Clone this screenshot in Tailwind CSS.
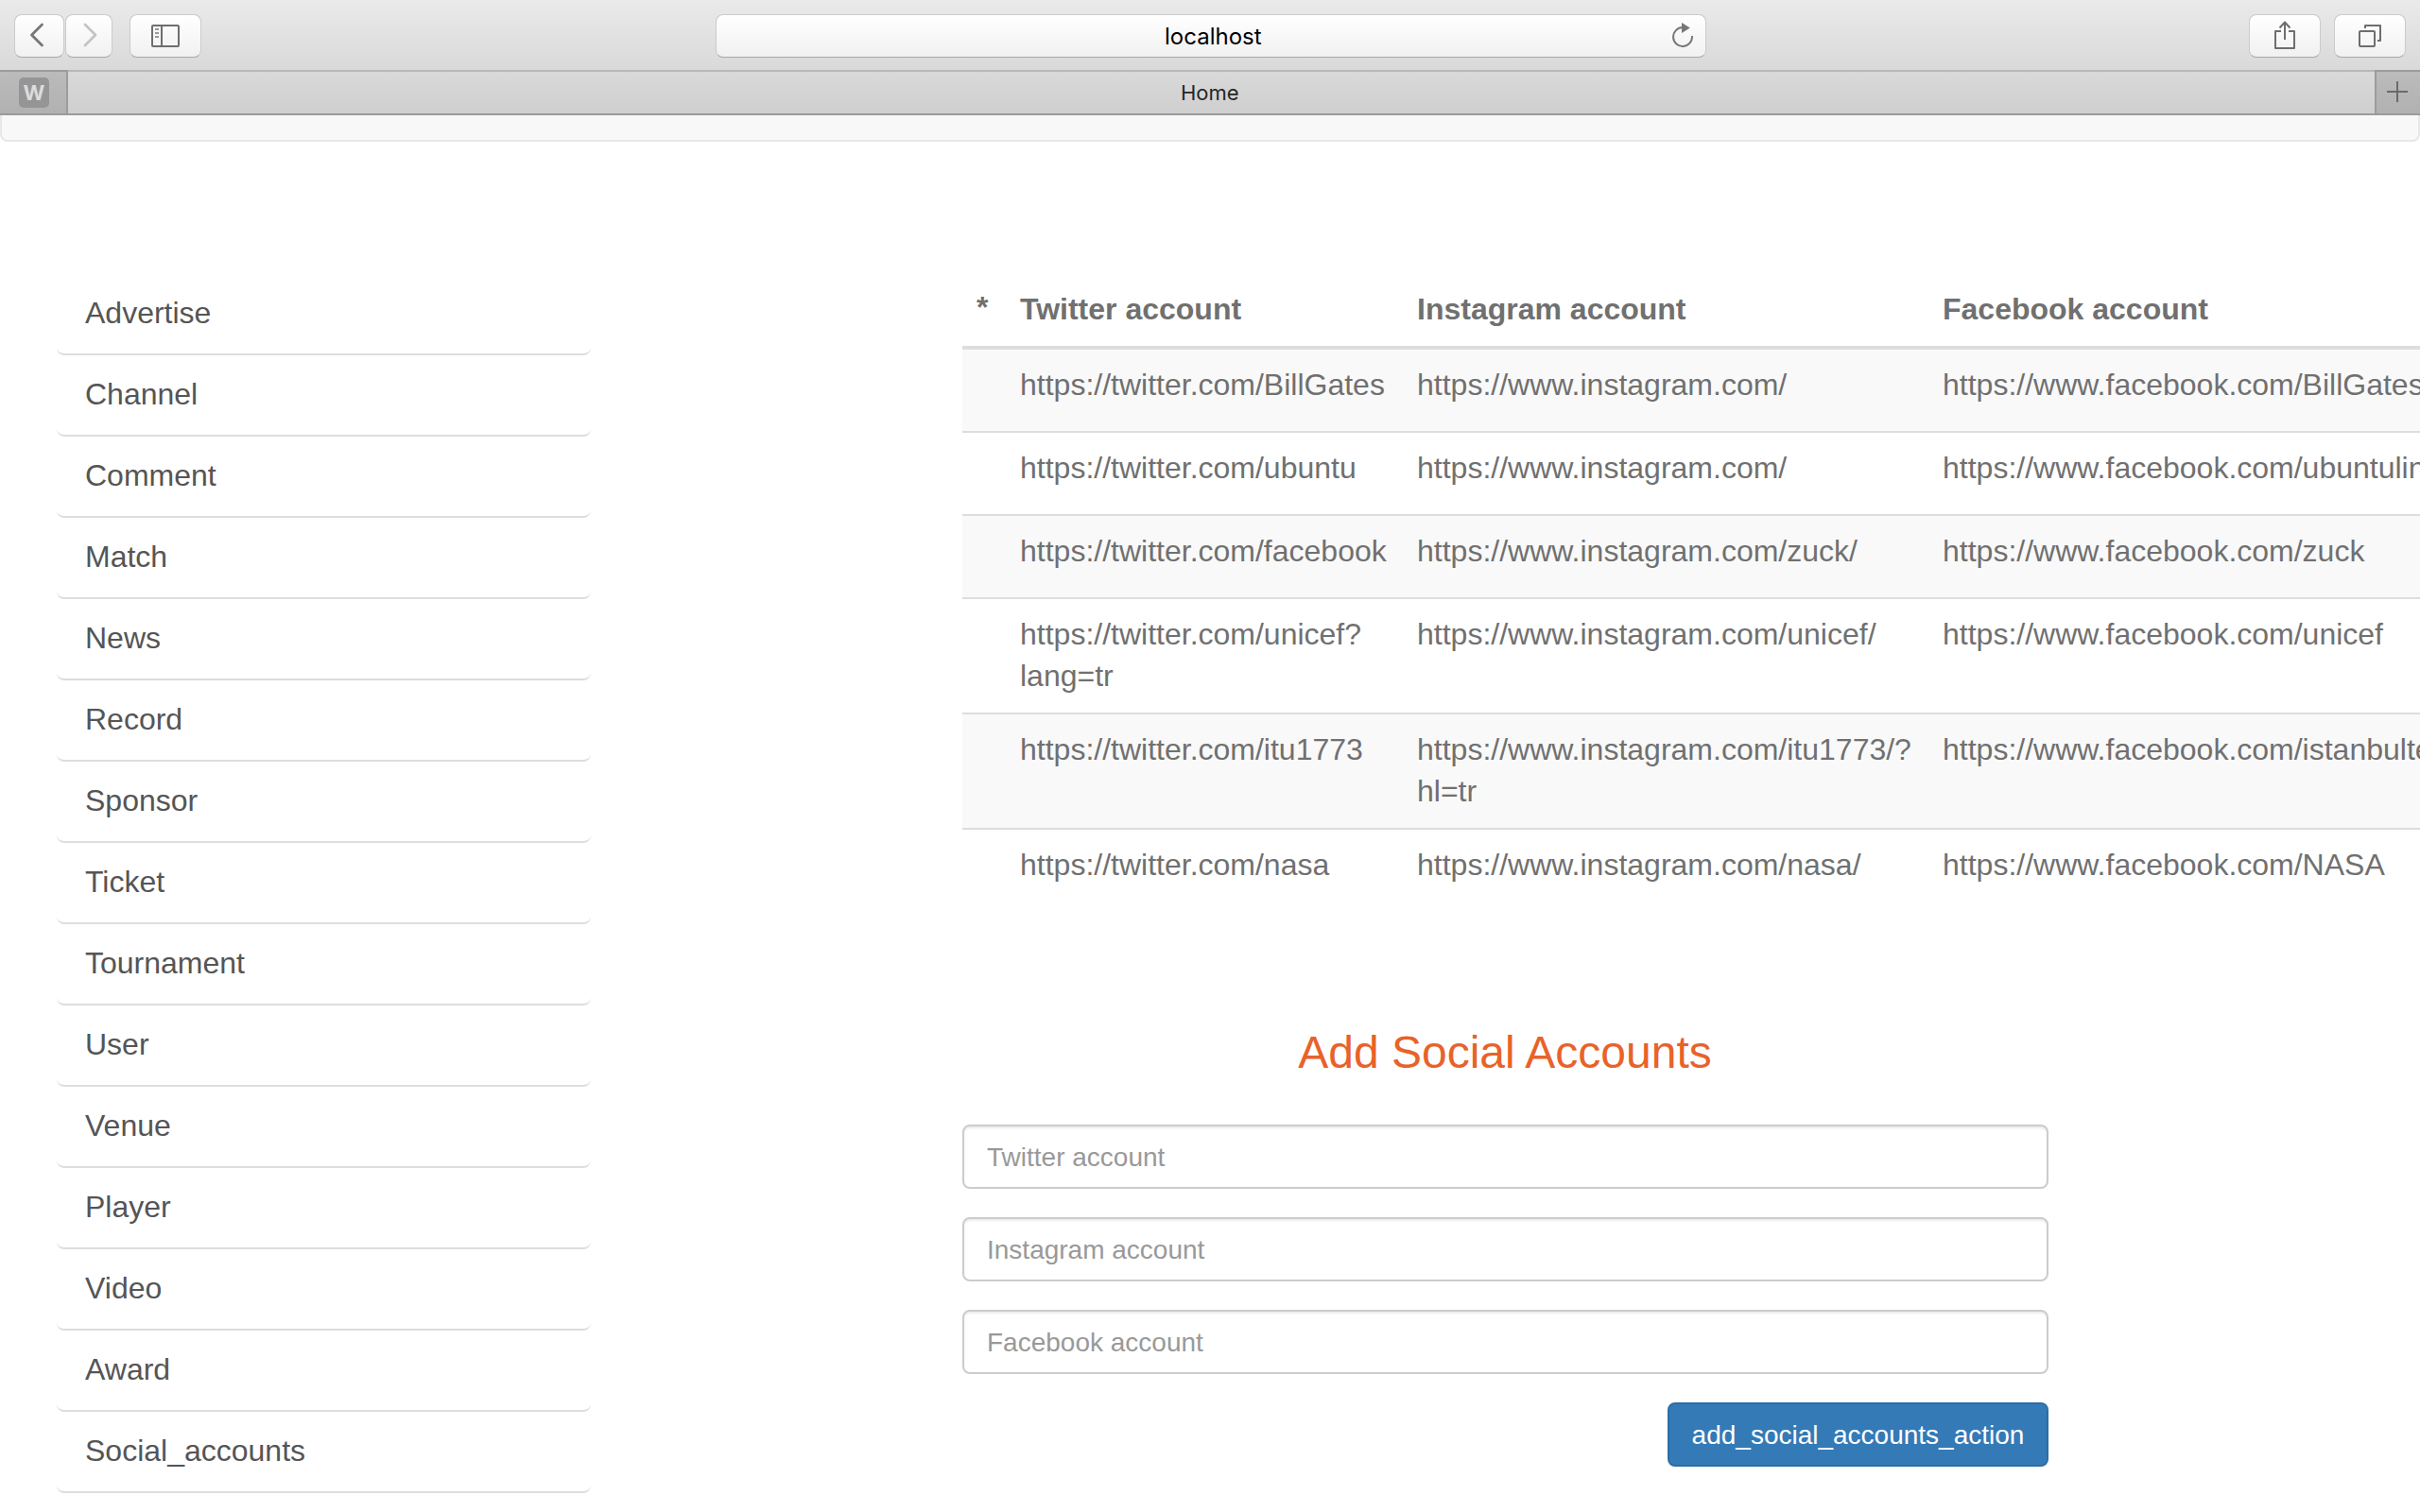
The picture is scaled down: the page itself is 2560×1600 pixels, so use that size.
<!DOCTYPE html>
<html lang="en">
<head>
<meta charset="utf-8">
<title>Home</title>
<script src="https://cdn.jsdelivr.net/npm/@tailwindcss/browser@4"></script>
</head>
<body class="w-[2560px] h-[1600px] overflow-hidden bg-white font-['Liberation_Sans',Arial,sans-serif] flex flex-col">

<!-- Browser toolbar -->
<header class="h-[76px] shrink-0 flex items-start pt-[15px] bg-linear-to-b from-[#eaeaea] to-[#d9d9d9] border-b-2 border-[#b8b8b8] font-[Inter,sans-serif]">
  <div class="flex gap-px ml-[15px]">
    <button class="w-[53px] h-[46px] rounded-[8px] border border-[#cbcbcb] border-b-[#a8a8a8] bg-linear-to-b from-white to-[#f1f1f1]">
      <svg class="block" width="51" height="44" viewBox="16 16 51 44" fill="none" stroke="#777" stroke-width="2.8" stroke-linecap="round" stroke-linejoin="round"><path d="M44.5 26 33.5 37l11 11"/></svg>
    </button>
    <button class="w-[50px] h-[46px] rounded-[8px] border border-[#cbcbcb] border-b-[#a8a8a8] bg-linear-to-b from-white to-[#f1f1f1]">
      <svg class="block" width="48" height="44" viewBox="70 16 48 44" fill="none" stroke="#c4c4c4" stroke-width="2.8" stroke-linecap="round" stroke-linejoin="round"><path d="m90 26 11 11-11 11"/></svg>
    </button>
  </div>
  <button class="ml-[18px] w-[76px] h-[46px] rounded-[8px] border border-[#cbcbcb] border-b-[#a8a8a8] bg-linear-to-b from-white to-[#f1f1f1]">
    <svg class="block" width="74" height="44" viewBox="138 16 74 44" fill="none" stroke="#6e6e6e" stroke-width="2"><rect x="161" y="27" width="28" height="22" rx="1"/><path d="M171 27v22"/><path stroke="#999" d="M164 31h4M164 35h4M164 39h4"/></svg>
  </button>
  <div class="ml-[544px] w-[1048px] h-[46px] rounded-[8px] border border-[#cbcbcb] border-b-[#a8a8a8] bg-linear-to-b from-white to-[#f1f1f1] flex items-start">
    <span class="ml-[474px] mt-[1px] w-[104px] text-[24px] leading-[44px] text-black">localhost</span>
    <svg class="ml-auto" width="50" height="44" viewBox="1754 16 50 44" fill="none"><path stroke="#777" stroke-width="2" d="M1780 29a10 10 0 1 0 10 9"/><path fill="#777" d="M1779 24v11l8.800-5.500z"/></svg>
  </div>
  <button class="ml-[574px] w-[76px] h-[46px] rounded-[8px] border border-[#cbcbcb] border-b-[#a8a8a8] bg-linear-to-b from-white to-[#f1f1f1]">
    <svg class="block" width="74" height="44" viewBox="2380 16 74 44" fill="none" stroke="#6e6e6e" stroke-width="2" stroke-linejoin="round"><path d="M2413 33h-6v18h20V33h-6"/><path d="M2417 42V24M2411.500 29.500l5.500-6 5.500 6"/></svg>
  </button>
  <button class="ml-[14px] w-[76px] h-[46px] rounded-[8px] border border-[#cbcbcb] border-b-[#a8a8a8] bg-linear-to-b from-white to-[#f1f1f1]">
    <svg class="block" width="74" height="44" viewBox="2470 16 74 44" fill="none" stroke="#6e6e6e" stroke-width="2" stroke-linejoin="round"><rect x="2496" y="33" width="16" height="16" rx="1"/><path d="M2502 30v-3h16v16h-3"/></svg>
  </button>
</header>

<!-- Tab bar -->
<div class="h-[46px] shrink-0 flex border-b-2 border-[#9b9b9b] bg-linear-to-b from-[#d9d9d9] to-[#cfcfcf] font-[Inter,sans-serif]">
  <div class="w-[72px] -mt-[2px] h-[46px] border-r-2 border-t-2 border-[#9c9c9c] bg-linear-to-b from-[#bbb] to-[#b1b1b1] flex items-center justify-center">
    <span class="size-[32px] mr-[-2px] rounded-[5px] bg-[#959595] text-[#dcdcdc] text-[22px] leading-[32px] font-bold text-center">W</span>
  </div>
  <div class="flex-1 flex"><span class="ml-[1177px] text-[22px] leading-[44px] text-[#262626]">Home</span></div>
  <div class="w-[48px] -mt-[2px] h-[46px] border-l-2 border-t-2 border-[#9c9c9c] bg-linear-to-b from-[#bbb] to-[#b1b1b1]">
    <svg class="block" width="46" height="44" viewBox="2514 76 46 44" fill="none" stroke="#6a6a6a" stroke-width="2"><path d="M2525 97h22M2536 86v22"/></svg>
  </div>
</div>

<!-- Bottom edge of the site navbar -->
<div class="h-[28px] shrink-0 bg-[#f8f8f8] border-2 border-t-0 border-[#e7e7e7] rounded-b-[8px]"></div>

<main class="flex flex-1 min-h-0">
  <nav class="ml-[60px] mt-[140px] w-[565px] shrink-0 text-[32px] leading-[46px] text-[#555]">
    <a class="flex h-[86px] pl-[30px] pt-[18px] border-b-2 border-[#ddd] rounded-b-[8px]">Advertise</a>
    <a class="flex h-[86px] pl-[30px] pt-[18px] border-b-2 border-[#ddd] rounded-b-[8px]">Channel</a>
    <a class="flex h-[86px] pl-[30px] pt-[18px] border-b-2 border-[#ddd] rounded-b-[8px]">Comment</a>
    <a class="flex h-[86px] pl-[30px] pt-[18px] border-b-2 border-[#ddd] rounded-b-[8px]">Match</a>
    <a class="flex h-[86px] pl-[30px] pt-[18px] border-b-2 border-[#ddd] rounded-b-[8px]">News</a>
    <a class="flex h-[86px] pl-[30px] pt-[18px] border-b-2 border-[#ddd] rounded-b-[8px]">Record</a>
    <a class="flex h-[86px] pl-[30px] pt-[18px] border-b-2 border-[#ddd] rounded-b-[8px]">Sponsor</a>
    <a class="flex h-[86px] pl-[30px] pt-[18px] border-b-2 border-[#ddd] rounded-b-[8px]">Ticket</a>
    <a class="flex h-[86px] pl-[30px] pt-[18px] border-b-2 border-[#ddd] rounded-b-[8px]">Tournament</a>
    <a class="flex h-[86px] pl-[30px] pt-[18px] border-b-2 border-[#ddd] rounded-b-[8px]">User</a>
    <a class="flex h-[86px] pl-[30px] pt-[18px] border-b-2 border-[#ddd] rounded-b-[8px]">Venue</a>
    <a class="flex h-[86px] pl-[30px] pt-[18px] border-b-2 border-[#ddd] rounded-b-[8px]">Player</a>
    <a class="flex h-[86px] pl-[30px] pt-[18px] border-b-2 border-[#ddd] rounded-b-[8px]">Video</a>
    <a class="flex h-[86px] pl-[30px] pt-[18px] border-b-2 border-[#ddd] rounded-b-[8px]">Award</a>
    <a class="flex h-[86px] pl-[30px] pt-[18px] border-b-2 border-[#ddd] rounded-b-[8px]">Social_accounts</a>
  </nav>

  <section class="ml-[393px] flex-1 min-w-0">
    <!-- Accounts table -->
    <div class="mt-[140px] text-[32px] leading-[44px] text-[#707070] whitespace-nowrap overflow-hidden">
      <div class="grid grid-cols-[61px_420px_556px_505px] h-[80px] pt-[15px] border-b-4 border-[#ddd] font-bold">
        <span class="pl-[15px] -mt-[2px]">*</span><span>Twitter account</span><span>Instagram account</span><span>Facebook account</span>
      </div>
      <div class="grid grid-cols-[61px_420px_556px_505px] h-[86px] pt-[15px] bg-[#f9f9f9]">
        <span></span><span>https://twitter.com/BillGates</span><span>https://www.instagram.com/</span><span>https://www.facebook.com/BillGates/</span>
      </div>
      <div class="grid grid-cols-[61px_420px_556px_505px] h-[88px] pt-[15px] border-t-2 border-[#ddd]">
        <span></span><span>https://twitter.com/ubuntu</span><span>https://www.instagram.com/</span><span>https://www.facebook.com/ubuntulinux</span>
      </div>
      <div class="grid grid-cols-[61px_420px_556px_505px] h-[88px] pt-[15px] border-t-2 border-[#ddd] bg-[#f9f9f9]">
        <span></span><span>https://twitter.com/facebook</span><span>https://www.instagram.com/zuck/</span><span>https://www.facebook.com/zuck</span>
      </div>
      <div class="grid grid-cols-[61px_420px_556px_505px] h-[122px] pt-[15px] border-t-2 border-[#ddd]">
        <span></span><span>https://twitter.com/unicef?<br>lang=tr</span><span>https://www.instagram.com/unicef/</span><span>https://www.facebook.com/unicef</span>
      </div>
      <div class="grid grid-cols-[61px_420px_556px_505px] h-[122px] pt-[15px] border-t-2 border-[#ddd] bg-[#f9f9f9]">
        <span></span><span>https://twitter.com/itu1773</span><span>https://www.instagram.com/itu1773/?<br>hl=tr</span><span>https://www.facebook.com/istanbulteknik</span>
      </div>
      <div class="grid grid-cols-[61px_420px_556px_505px] h-[88px] pt-[15px] border-t-2 border-[#ddd]">
        <span></span><span>https://twitter.com/nasa</span><span>https://www.instagram.com/nasa/</span><span>https://www.facebook.com/NASA</span>
      </div>
    </div>

    <!-- New account form -->
    <form class="mt-[120px] w-[1149px] flex flex-col">
      <h2 class="h-[106px] pr-[1px] text-center text-[48px] leading-[60px] text-[#e8622a]">Add Social Accounts</h2>
      <input class="h-[68px] mb-[30px] px-[24px] pt-[2px] text-[28px] rounded-[8px] border-2 border-[#ccc] shadow-[inset_0_2px_2px_rgba(0,0,0,0.075)] placeholder:text-[#999]" placeholder="Twitter account">
      <input class="h-[68px] mb-[30px] px-[24px] pt-[2px] text-[28px] rounded-[8px] border-2 border-[#ccc] shadow-[inset_0_2px_2px_rgba(0,0,0,0.075)] placeholder:text-[#999]" placeholder="Instagram account">
      <input class="h-[68px] mb-[30px] px-[24px] pt-[2px] text-[28px] rounded-[8px] border-2 border-[#ccc] shadow-[inset_0_2px_2px_rgba(0,0,0,0.075)] placeholder:text-[#999]" placeholder="Facebook account">
      <button type="button" class="self-end h-[68px] w-[403px] pt-[1px] text-[28px] leading-[63px] rounded-[8px] border-2 border-[#2e6da4] bg-[#337ab7] text-white">add_social_accounts_action</button>
    </form>
  </section>
</main>
</body>
</html>
